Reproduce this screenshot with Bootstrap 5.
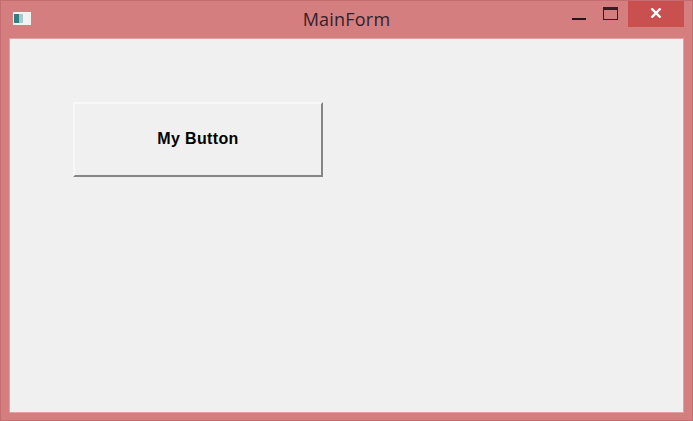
<!DOCTYPE html>
<html lang="en">
<head>
    <meta charset="UTF-8">
    <meta name="viewport" content="width=device-width, initial-scale=1.0">
    <title>MainForm</title>
    <link href="https://cdn.jsdelivr.net/npm/bootstrap@5.3.0/dist/css/bootstrap.min.css" rel="stylesheet">
    <style>
        html, body { width: 693px; height: 421px; overflow: hidden; margin: 0; }
        .win-frame { width: 693px; height: 421px; background: #d57e7f; border: 1px solid #c56c70; padding: 0 9px 8px 9px; }
        .win-titlebar { height: 38px; display: grid; grid-template-columns: 1fr auto 1fr; }
        .win-title { font-family: "Open Sans", "Noto Sans", sans-serif; font-size: 18px; letter-spacing: .2px; line-height: 36px; color: #33212a; }
        .win-icon { width: 18px; height: 13px; margin: 11px 0 0 3px; display: block; }
        .win-controls { height: 26px; margin-right: -1px; }
        .win-min { width: 14px; height: 2px; background: #2a1418; margin: 17px 17px 0 0; }
        .win-max { width: 15px; height: 13px; border: 1px solid #3a1c20; border-top-width: 3px; margin: 6px 10px 0 0; }
        .win-close { width: 56px; height: 26px; background: #c9504f; padding-bottom: 2px; }
        .win-client { height: 373px; background: #f0f0f0; padding: 63px 0 0 63px; box-shadow: 0 0 0 1px #e3a0a0; }
        .form-button { width: 250px; height: 75px; background: #f0f0f0; border: 2px solid; border-color: #f8f8f8 #858585 #858585 #f8f8f8; border-radius: 0; padding: 0 0 2px 0; font-family: "Liberation Sans", Arial, sans-serif; font-weight: 700; font-size: 16px; letter-spacing: .35px; color: #000; }
    </style>
</head>
<body>
    <div class="win-frame">
        <div class="win-titlebar">
            <div>
                <svg class="win-icon" viewBox="0 0 18 13">
                    <rect width="18" height="13" fill="#f2f2f2"/>
                    <rect x="1" y="2" width="5" height="9" fill="#2f7f80"/>
                    <rect x="6" y="2" width="4" height="9" fill="#a9c8cc"/>
                </svg>
            </div>
            <div class="win-title">MainForm</div>
            <div class="win-controls d-flex justify-content-end align-items-start">
                <div class="win-min"></div>
                <div class="win-max"></div>
                <div class="win-close d-flex align-items-center justify-content-center">
                    <svg width="12" height="10" viewBox="0 0 12 10"><path d="M1.5 0.5 L10.5 9.5 M10.5 0.5 L1.5 9.5" stroke="#fff" stroke-width="2.4"/></svg>
                </div>
            </div>
        </div>
        <div class="win-client">
            <button type="button" class="form-button">My Button</button>
        </div>
    </div>
    <script src="https://cdn.jsdelivr.net/npm/bootstrap@5.3.0/dist/js/bootstrap.bundle.min.js"></script>
</body>
</html>
